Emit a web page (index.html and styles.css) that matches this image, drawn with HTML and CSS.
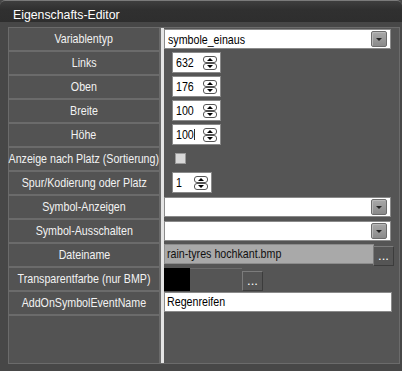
FILE: index.html
```html
<!DOCTYPE html>
<html lang="de">
<head>
    <meta charset="UTF-8">
    <title>Eigenschafts-Editor</title>
    <link rel="stylesheet" href="styles.css">
</head>
<body>
    <div class="window">
        <div class="titlebar">Eigenschafts-Editor</div>
        <div class="grid">
            <div class="labels">
                <div class="label"><span class="txt">Variablentyp</span></div>
                <div class="label"><span class="txt">Links</span></div>
                <div class="label"><span class="txt">Oben</span></div>
                <div class="label"><span class="txt">Breite</span></div>
                <div class="label"><span class="txt">Höhe</span></div>
                <div class="label"><span class="txt">Anzeige nach Platz (Sortierung)</span></div>
                <div class="label"><span class="txt">Spur/Kodierung oder Platz</span></div>
                <div class="label"><span class="txt">Symbol-Anzeigen</span></div>
                <div class="label"><span class="txt">Symbol-Ausschalten</span></div>
                <div class="label"><span class="txt">Dateiname</span></div>
                <div class="label"><span class="txt">Transparentfarbe (nur BMP)</span></div>
                <div class="label"><span class="txt">AddOnSymbolEventName</span></div>
                <div class="filler"></div>
            </div>
            <div class="splitter"></div>
            <div class="values">
                <div class="row">
                    <div class="combo"><span class="val">symbole_einaus</span><span class="combo-btn"></span></div>
                </div>
                <div class="row">
                    <div class="spin"><span class="val">632</span><span class="spin-btns"><span class="spin-up"></span><span class="spin-down"></span></span></div>
                </div>
                <div class="row">
                    <div class="spin"><span class="val">176</span><span class="spin-btns"><span class="spin-up"></span><span class="spin-down"></span></span></div>
                </div>
                <div class="row">
                    <div class="spin"><span class="val">100</span><span class="spin-btns"><span class="spin-up"></span><span class="spin-down"></span></span></div>
                </div>
                <div class="row">
                    <div class="spin"><span class="val">100<span class="caret"></span></span><span class="spin-btns"><span class="spin-up"></span><span class="spin-down"></span></span></div>
                </div>
                <div class="row">
                    <div class="check"></div>
                </div>
                <div class="row">
                    <div class="spin small"><span class="val">1</span><span class="spin-btns"><span class="spin-up"></span><span class="spin-down"></span></span></div>
                </div>
                <div class="row">
                    <div class="combo"><span class="val"></span><span class="combo-btn"></span></div>
                </div>
                <div class="row">
                    <div class="combo"><span class="val"></span><span class="combo-btn"></span></div>
                </div>
                <div class="row">
                    <div class="file-text"><span class="val">rain-tyres hochkant.bmp</span></div>
                    <div class="dots file-dots">...</div>
                </div>
                <div class="row">
                    <div class="swatch"></div>
                    <div class="color-rest"></div>
                    <div class="dots color-dots">...</div>
                </div>
                <div class="row">
                    <div class="text-field"><span class="val">Regenreifen</span></div>
                </div>
            </div>
        </div>
    </div>
</body>
</html>
```

FILE: styles.css
```css
body {
    margin: 0;
    background: #474747;
    font-family: "Liberation Sans Narrow", "Arial Narrow", "Liberation Sans", Arial, sans-serif;
    font-size: 13px;
}

.window {
    width: 402px;
    height: 371px;
    background: #474747;
    border-radius: 5px 5px 0 0;
    overflow: hidden;
}

.titlebar {
    height: 22px;
    box-sizing: border-box;
    padding: 6px 0 0 13px;
    line-height: 16px;
    font-family: "Liberation Sans", Arial, sans-serif;
    font-size: 12.3px;
    color: #fff;
    background: linear-gradient(#3e3e3e, #303030 40%, #2e2e2e);
    border-top: 1px solid #7a7a7a;
    border-radius: 5px 5px 0 0;
}

.grid {
    display: flex;
    height: 335px;
    margin: 5px 2px 0 8px;
    border-top: 1px solid #6b6b6b;
    border-bottom: 1px solid #6b6b6b;
}

/* no narrow font installed: squeeze Liberation Sans to Arial Narrow width */
.txt,
.val {
    display: inline-block;
    white-space: nowrap;
    transform: scaleX(0.82);
}

.val {
    transform-origin: left center;
}

.labels {
    width: 150px;
    padding: 0 2px 0 1px;
    background: #6b6b6b;
    display: flex;
    flex-direction: column;
    gap: 2px;
}

.label {
    flex: none;
    height: 22px;
    line-height: 22px;
    display: flex;
    justify-content: center;
    color: #f2f2f2;
    background: #535353;
}

.filler {
    flex: 1;
    background: #535353;
}

.splitter {
    width: 3px;
    background: #e4e4e4;
}

.values {
    flex: 1;
    background: #555;
    border-right: 1px solid #6b6b6b;
}

.row {
    height: 24px;
    display: flex;
    align-items: flex-start;
}

/* dropdown */
.combo {
    margin-top: 1px;
    width: 227px;
    height: 20px;
    box-sizing: border-box;
    border: 1px solid #8a8a8a;
    background: #fff;
    display: flex;
    align-items: center;
    justify-content: space-between;
    padding-left: 3px;
}

.combo-btn {
    width: 16px;
    height: 16px;
    box-sizing: border-box;
    margin-right: 3px;
    border: 1px solid #6c6c6c;
    border-radius: 2px;
    background: linear-gradient(#a8a8a8, #8a8a8a);
    box-shadow: inset 1px 1px 0 #b8b8b8;
    display: flex;
    align-items: center;
    justify-content: center;
}

.combo-btn::after {
    content: "";
    margin-top: 1px;
    border-left: 3px solid transparent;
    border-right: 3px solid transparent;
    border-top: 3px solid #222;
}

/* spin boxes */
.spin {
    margin-left: 8px;
    width: 49px;
    height: 21px;
    box-sizing: border-box;
    border: 1px solid #8a8a8a;
    padding-left: 3px;
    background: #fff;
    display: flex;
    align-items: center;
    justify-content: space-between;
}

.spin.small {
    width: 40px;
}

.caret {
    display: inline-block;
    vertical-align: -1px;
    width: 1px;
    height: 11px;
    background: #000;
}

.spin-btns {
    display: flex;
    flex-direction: column;
    margin-right: 3px;
}

.spin-up,
.spin-down {
    width: 14px;
    height: 7px;
    box-sizing: border-box;
    border: 1px solid #555;
    border-radius: 3px;
    background: #fff;
    display: flex;
    align-items: center;
    justify-content: center;
}

.spin-up::after,
.spin-down::after {
    content: "";
    border-left: 3px solid transparent;
    border-right: 3px solid transparent;
}

.spin-up::after {
    border-bottom: 3px solid #000;
}

.spin-down::after {
    border-top: 3px solid #000;
}

.check {
    margin: 5px 0 0 11px;
    width: 11px;
    height: 11px;
    box-sizing: border-box;
    border: 1px solid #9a9a9a;
    background: #d8d8d8;
}

/* file name */
.file-text {
    width: 210px;
    height: 20px;
    box-sizing: border-box;
    padding-left: 2px;
    line-height: 18px;
    color: #111;
    background: #a9a9a9;
    border: 1px solid #8c8c8c;
}

.dots {
    width: 21px;
    height: 20px;
    box-sizing: border-box;
    line-height: 18px;
    text-align: center;
    color: #fff;
    background: #555;
    border: 1px solid;
    border-color: #7c7c7c #3c3c3c #3c3c3c #7c7c7c;
}

.file-dots {
    margin: 2px 0 0 -1px;
}

.swatch {
    width: 26px;
    height: 23px;
    background: #000;
}

.color-rest {
    width: 52px;
    height: 23px;
    box-sizing: border-box;
    border-top: 1px solid #6b6b6b;
}

.color-dots {
    margin-top: 3px;
}

.text-field {
    width: 228px;
    height: 20px;
    box-sizing: border-box;
    padding-left: 2px;
    line-height: 18px;
    color: #000;
    background: #fff;
    border: 1px solid #8a8a8a;
}
```
